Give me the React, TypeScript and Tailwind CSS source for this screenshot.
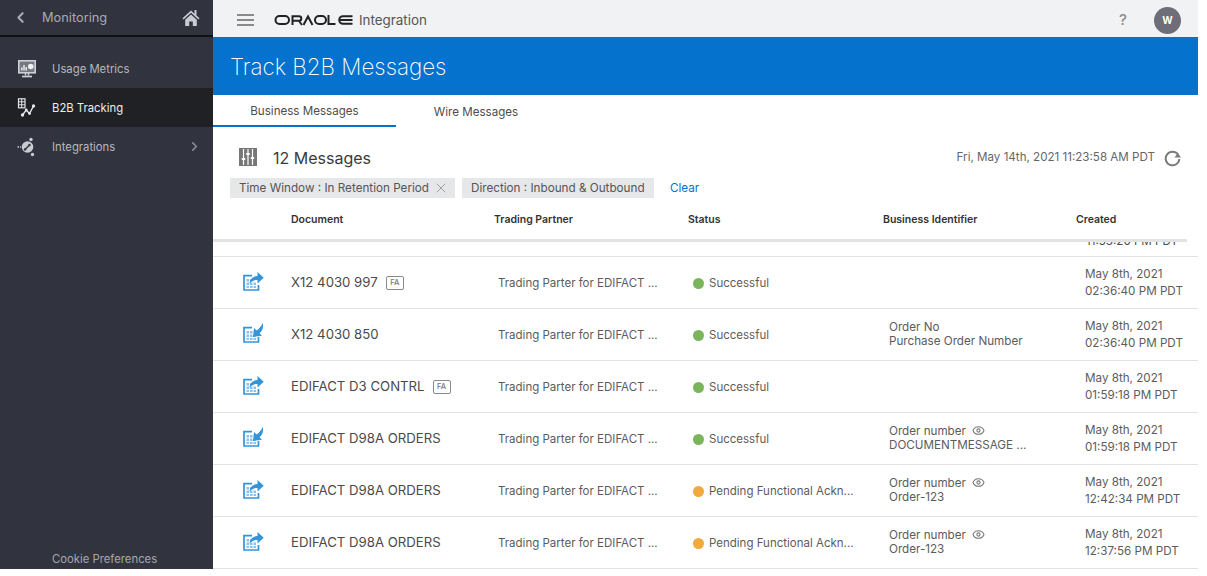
import { ChevronLeft, ChevronRight, Eye, X } from "lucide-react";

type Row = {
  doc: string;
  fa?: boolean;
  out: boolean;
  pending?: boolean;
  idLabel?: string;
  idValue?: string;
  eye?: boolean;
  date: string;
  time: string;
};

const rows: Row[] = [
  { doc: "X12 4030 997", fa: true, out: true, date: "May 8th, 2021", time: "02:36:40 PM PDT" },
  { doc: "X12 4030 850", out: false, idLabel: "Order No", idValue: "Purchase Order Number", date: "May 8th, 2021", time: "02:36:40 PM PDT" },
  { doc: "EDIFACT D3 CONTRL", fa: true, out: true, date: "May 8th, 2021", time: "01:59:18 PM PDT" },
  { doc: "EDIFACT D98A ORDERS", out: false, idLabel: "Order number", idValue: "DOCUMENTMESSAGE ...", eye: true, date: "May 8th, 2021", time: "01:59:18 PM PDT" },
  { doc: "EDIFACT D98A ORDERS", out: true, pending: true, idLabel: "Order number", idValue: "Order-123", eye: true, date: "May 8th, 2021", time: "12:42:34 PM PDT" },
  { doc: "EDIFACT D98A ORDERS", out: true, pending: true, idLabel: "Order number", idValue: "Order-123", eye: true, date: "May 8th, 2021", time: "12:37:56 PM PDT" },
];

function HomeIcon() {
  return (
    <svg width="18" height="18" viewBox="0 0 18 18" className="ml-auto" fill="#c9cbd0">
      <path d="M9 1.500L0.500 9.200l1.100 1.200L9 3.800l7.400 6.600 1.100-1.200-3-2.700V1h-2v3.700z" />
      <path d="M3.200 10.800L9 5.600l5.800 5.200V17h-4v-4.500H7.200V17h-4z" />
    </svg>
  );
}

function MetricsIcon() {
  return (
    <svg width="20" height="20" viewBox="0 0 20 20" fill="none">
      <rect x="1.800" y="1.800" width="16.400" height="12" fill="#777982" stroke="#cfd0d4" strokeWidth="1.600" />
      <path d="M4.800 11.500V8.500M7 11.500V6M9.200 11.500V8" stroke="#f0f0f2" strokeWidth="1.400" />
      <circle cx="13.800" cy="7.500" r="2.800" fill="#f0f0f2" />
      <path d="M8.500 14v2.500M11.500 14v2.500" stroke="#cfd0d4" strokeWidth="1.500" />
      <path d="M5 17.500h10" stroke="#cfd0d4" strokeWidth="1.700" />
    </svg>
  );
}

function TrackingIcon() {
  return (
    <svg width="20" height="20" viewBox="0 0 20 20" fill="none">
      <rect x="1.500" y="0.800" width="6.500" height="9" stroke="#e4e5e8" strokeWidth="1.200" />
      <path d="M4.700 .8v9M1.500 3.800h6.500M1.500 6.800h6.500" stroke="#e4e5e8" strokeWidth="1" />
      <path d="M5.500 17l3.700-5 3.300 3.500L16.500 8" stroke="#e4e5e8" strokeWidth="1.400" />
      <circle cx="5.500" cy="17" r="1.700" fill="#e4e5e8" />
      <circle cx="9.200" cy="12" r="1.400" fill="#e4e5e8" />
      <circle cx="12.500" cy="15.500" r="1.400" fill="#e4e5e8" />
      <circle cx="16.500" cy="8" r="1.700" fill="#e4e5e8" />
    </svg>
  );
}

function IntegrationsIcon() {
  return (
    <svg width="20" height="20" viewBox="0 0 20 20" fill="none">
      <circle cx="10.500" cy="10" r="5.800" fill="#c9cbd0" />
      <path d="M8 12.500l4.500-4.500" stroke="#31333f" strokeWidth="1.500" />
      <circle cx="12.500" cy="8" r="1.200" fill="#31333f" />
      <circle cx="8" cy="12.500" r="1.200" fill="#31333f" />
      <path d="M0.500 10h3.500" stroke="#c9cbd0" strokeWidth="1.700" strokeDasharray="1.500 1" />
      <circle cx="14" cy="2.500" r="1.700" fill="#c9cbd0" />
      <circle cx="15.500" cy="17.500" r="1.700" fill="#c9cbd0" />
    </svg>
  );
}

function DocIcon({ out }: { out: boolean }) {
  return (
    <svg width="21" height="20" viewBox="0 0 21 20" fill="none">
      <path d="M9 4.700H1v14.300h14.500v-5" stroke="#3295da" strokeWidth="1.700" />
      <path d="M3.500 8h2.500v2.500H3.500zM7 8h2.500v2.500H7zM3.500 11.500h2.500v2.500H3.500zM7 11.500h2.500v2.500H7zM10.500 11.500h2.500v2.500h-2.500zM3.500 15h2.500v2H3.500zM7 15h2.500v2H7zM10.500 15h2.500v2h-2.500z" fill="#8cc2ea" />
      {out ? (
        <path d="M6.500 13c.3-5 3.500-7.800 8-8V1l6.200 5.800-6.200 5.700V9c-3.500 0-6.200 1.200-8 4z" fill="#3295da" />
      ) : (
        <path d="M19.800 0c1 4.500-.5 8-3.300 10.300l2.500 2.500-9 1.200 1-9 2.600 2.600C15.800 6 18.200 3.500 19.800 0z" fill="#3295da" />
      )}
    </svg>
  );
}

export default function App() {
  return (
    <div className="flex h-[569px] w-[1198px] overflow-hidden bg-white font-['Inter',sans-serif] text-[#4a4a4a]">
      {/* Sidebar */}
      <aside className="flex w-[213px] shrink-0 flex-col bg-[#31333f] text-[11.3px] text-[#b7b8bd]">
        <div className="flex h-[37px] items-center border-b-2 border-[#111] pl-[12px] pr-[13px]">
          <ChevronLeft size={17} strokeWidth={3} className="text-[#a9abb1]" />
          <span className="ml-[13px] text-[12.8px] text-[#a9abb1]">Monitoring</span>
          <HomeIcon />
        </div>
        <nav className="mt-[12px]">
          <div className="flex h-[39px] items-center pl-[17px]">
            <MetricsIcon />
            <span className="ml-[15px] pt-[2px]">Usage Metrics</span>
          </div>
          <div className="flex h-[39px] items-center bg-[#1f2124] pl-[17px] text-[#eceded]">
            <TrackingIcon />
            <span className="ml-[15px] pt-[2px]">B2B Tracking</span>
          </div>
          <div className="flex h-[39px] items-center pl-[17px] pr-[11px]">
            <IntegrationsIcon />
            <span className="ml-[15px] pt-[2px]">Integrations</span>
            <ChevronRight size={15} strokeWidth={2.5} className="ml-auto text-[#8f9197]" />
          </div>
        </nav>
        <div className="mt-auto pb-[1px] pl-[52px] text-[#a6a7ad]">Cookie Preferences</div>
      </aside>

      {/* Main */}
      <main className="flex min-w-0 flex-1 flex-col">
        <header className="flex h-[37px] shrink-0 items-center bg-[#f1f2f4] pl-[24px] pr-[17px] pt-[3px]">
          <div className="flex w-[17px] flex-col gap-[3px]">
            <span className="h-[2px] bg-[#8a8a8a]" />
            <span className="h-[2px] bg-[#8a8a8a]" />
            <span className="h-[2px] bg-[#8a8a8a]" />
          </div>
          <svg width="80" height="12" viewBox="0 0 79 12" className="ml-[20px]" fill="none" stroke="#222" strokeWidth="2">
            <rect x="1" y="2" width="13.500" height="8" rx="4" />
            <path d="M18 11V2.200h6.500a2.300 2.300 0 0 1 0 4.600H18M24.500 7l3 4" />
            <path d="M29 11l4.500-8.500 4.500 8.500" />
            <rect x="40.500" y="2" width="11" height="8" rx="4" />
            <path d="M54 1v9h7" />
            <path d="M78 2.200h-9.500a3.800 3.800 0 0 0 0 7.600H78M64.500 6H78" />
          </svg>
          <span className="ml-[5px] text-[13.4px] text-[#555]">Integration</span>
          <span className="ml-auto text-[15px] font-medium text-[#8b8b8b]">?</span>
          <span className="ml-[27px] flex h-[27px] w-[27px] items-center justify-center rounded-full bg-[#6f6e78] text-[10px] font-bold text-white">
            W
          </span>
        </header>

        <div className="flex h-[58px] shrink-0 items-center bg-[#0572ce] pl-[17px] pt-[1px] text-[22.4px] font-extralight text-white">
          Track B2B Messages
        </div>

        <div className="flex h-[32px] shrink-0 text-[11.6px] text-[#4d4d4d]">
          <div className="flex w-[183px] items-center justify-center border-b-[2px] border-[#0572ce] pt-[4px]">Business Messages</div>
          <div className="flex w-[160px] items-center justify-center pt-[3px]">Wire Messages</div>
        </div>

        <div className="flex h-[40px] shrink-0 items-center pl-[26px] pr-[17px] pt-[22px]">
          <svg width="18" height="18" viewBox="0 0 18 18" className="mb-[2px]">
            <rect width="18" height="18" fill="#777" />
            <path d="M4.500 1v16M13.500 1v16M9 1v16" stroke="#fff" strokeWidth="1.200" />
            <path d="M2.800 10h3.400v2H2.800zM7.300 5h3.400v2H7.300zM11.800 9h3.400v2h-3.400z" fill="#fff" />
          </svg>
          <span className="ml-[16px] text-[16px] text-[#3b3b3b]">12 Messages</span>
          <span className="ml-auto text-[11.6px] text-[#666]">Fri, May 14th, 2021 11:23:58 AM PDT</span>
          <svg width="17" height="17" viewBox="0 0 17 17" className="ml-[9px]" fill="none">
            <path d="M14 4.500A6.800 6.800 0 1 0 15.300 9" stroke="#7a7a7a" strokeWidth="2" />
            <path d="M10.500 7.500h6.500l-3.200-4.500z" fill="#7a7a7a" />
          </svg>
        </div>

        <div className="mt-[11px] flex h-[20px] shrink-0 items-center gap-[7px] pl-[17px] text-[11.7px] whitespace-nowrap text-[#555]">
          <span className="flex h-[20px] w-[225px] items-center bg-[#e6e7e8] pl-[9px] pt-[2px]">
            Time Window : In Retention Period
            <X size={16} strokeWidth={1} className="-mt-[2px] ml-auto mr-[6px] text-[#777]" />
          </span>
          <span className="flex h-[20px] w-[192px] items-center bg-[#e6e7e8] pl-[9px] pt-[2px]">Direction : Inbound &amp; Outbound</span>
          <span className="ml-[9px] pt-[2px] text-[#0572ce]">Clear</span>
        </div>

        <div className="mt-[9px] grid h-[22px] shrink-0 grid-cols-[78px_203px_194px_195px_193px_1fr] items-center pt-[3px] text-[10.5px] font-semibold text-[#333]">
          <span />
          <span>Document</span>
          <span>Trading Partner</span>
          <span>Status</span>
          <span>Business Identifier</span>
          <span>Created</span>
        </div>

        <div className="mr-[11px] mt-[10px] h-[3px] shrink-0 bg-[#e2e3e4]" />

        <div className="min-h-0 flex-1 overflow-hidden">
          <div className="flex h-[15px] items-start justify-end overflow-hidden border-b border-[#e2e3e4] pr-[20px]">
            <span className="-mt-[8px] text-[11.6px] leading-[14px]">11:53:20 PM PDT</span>
          </div>
          {rows.map((r, i) => (
            <div
              key={i}
              className="grid h-[52px] grid-cols-[78px_207px_195px_196px_196px_1fr] items-center border-b border-[#e2e3e4] text-[11.5px] text-[#5c5c5c]"
            >
              <span className="-mt-[3px] flex justify-center pl-[2px]">
                <DocIcon out={r.out} />
              </span>
              <span className="flex items-center pt-[1px] text-[13.2px] text-[#4a4a4a]">
                {r.doc}
                {r.fa && (
                  <span className="ml-[8px] flex h-[14px] w-[18px] items-center justify-center rounded-[2px] border border-[#8a8a8a] text-[7.5px] font-medium text-[#777]">
                    FA
                  </span>
                )}
              </span>
              <span className="pt-[2px]">Trading Parter for EDIFACT ...</span>
              <span className="flex items-center pt-[1px]">
                <span className={`mr-[5px] h-[11px] w-[11px] rounded-full ${r.pending ? "bg-[#f0aa3d]" : "bg-[#7ab55c]"}`} />
                <span className="pt-[1px]">{r.pending ? "Pending Functional Ackn..." : "Successful"}</span>
              </span>
              <span className="-mt-[2px] text-[11.65px] leading-[14px]">
                {r.idLabel && (
                  <span className="flex items-center">
                    {r.idLabel}
                    {r.eye && <Eye size={13} className="ml-[6px] text-[#777]" />}
                  </span>
                )}
                {r.idValue && <span className="block">{r.idValue}</span>}
              </span>
              <span className="text-[11.65px] leading-[17px]">
                <span className="block">{r.date}</span>
                <span className="block">{r.time}</span>
              </span>
            </div>
          ))}
        </div>
      </main>
    </div>
  );
}
